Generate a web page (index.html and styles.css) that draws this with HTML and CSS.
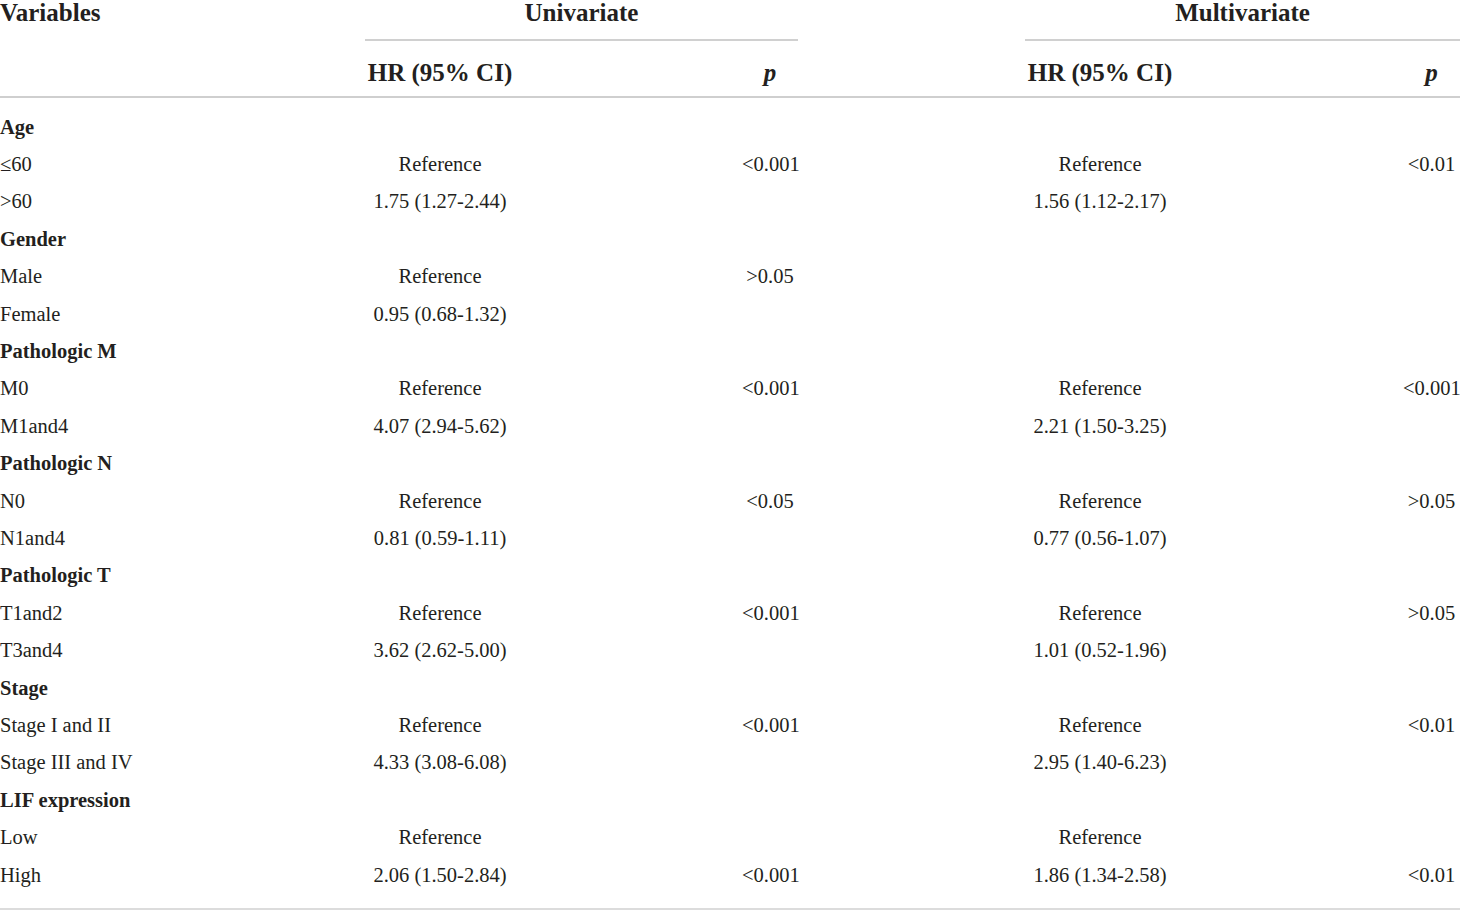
FILE: index.html
```html
<!DOCTYPE html>
<html lang="en">
<head>
<meta charset="utf-8">
<title>Cox regression</title>
<link rel="stylesheet" href="styles.css">
</head>
<body>
<table class="tbl">
  <colgroup>
    <col class="c-var"><col class="c-hr"><col class="c-gap"><col class="c-p"><col class="c-gap2"><col class="c-hr"><col class="c-gap3"><col class="c-p2">
  </colgroup>
  <thead>
    <tr class="h1">
      <th class="left">Variables</th>
      <th colspan="3" class="group">Univariate</th>
      <th></th>
      <th colspan="3" class="group">Multivariate</th>
    </tr>
    <tr class="h2">
      <th></th>
      <th>HR (95% CI)</th>
      <th></th>
      <th class="pi">p</th>
      <th></th>
      <th>HR (95% CI)</th>
      <th></th>
      <th class="pi">p</th>
    </tr>
  </thead>
  <tbody>
    <tr class="cat"><td class="left">Age</td><td></td><td></td><td></td><td></td><td></td><td></td><td></td></tr>
    <tr><td class="left">≤60</td><td>Reference</td><td></td><td>&lt;0.001</td><td></td><td>Reference</td><td></td><td>&lt;0.01</td></tr>
    <tr><td class="left">&gt;60</td><td>1.75 (1.27-2.44)</td><td></td><td></td><td></td><td>1.56 (1.12-2.17)</td><td></td><td></td></tr>
    <tr class="cat"><td class="left">Gender</td><td></td><td></td><td></td><td></td><td></td><td></td><td></td></tr>
    <tr><td class="left">Male</td><td>Reference</td><td></td><td>&gt;0.05</td><td></td><td></td><td></td><td></td></tr>
    <tr><td class="left">Female</td><td>0.95 (0.68-1.32)</td><td></td><td></td><td></td><td></td><td></td><td></td></tr>
    <tr class="cat"><td class="left">Pathologic M</td><td></td><td></td><td></td><td></td><td></td><td></td><td></td></tr>
    <tr><td class="left">M0</td><td>Reference</td><td></td><td>&lt;0.001</td><td></td><td>Reference</td><td></td><td>&lt;0.001</td></tr>
    <tr><td class="left">M1and4</td><td>4.07 (2.94-5.62)</td><td></td><td></td><td></td><td>2.21 (1.50-3.25)</td><td></td><td></td></tr>
    <tr class="cat"><td class="left">Pathologic N</td><td></td><td></td><td></td><td></td><td></td><td></td><td></td></tr>
    <tr><td class="left">N0</td><td>Reference</td><td></td><td>&lt;0.05</td><td></td><td>Reference</td><td></td><td>&gt;0.05</td></tr>
    <tr><td class="left">N1and4</td><td>0.81 (0.59-1.11)</td><td></td><td></td><td></td><td>0.77 (0.56-1.07)</td><td></td><td></td></tr>
    <tr class="cat"><td class="left">Pathologic T</td><td></td><td></td><td></td><td></td><td></td><td></td><td></td></tr>
    <tr><td class="left">T1and2</td><td>Reference</td><td></td><td>&lt;0.001</td><td></td><td>Reference</td><td></td><td>&gt;0.05</td></tr>
    <tr><td class="left">T3and4</td><td>3.62 (2.62-5.00)</td><td></td><td></td><td></td><td>1.01 (0.52-1.96)</td><td></td><td></td></tr>
    <tr class="cat"><td class="left">Stage</td><td></td><td></td><td></td><td></td><td></td><td></td><td></td></tr>
    <tr><td class="left">Stage I and II</td><td>Reference</td><td></td><td>&lt;0.001</td><td></td><td>Reference</td><td></td><td>&lt;0.01</td></tr>
    <tr><td class="left">Stage III and IV</td><td>4.33 (3.08-6.08)</td><td></td><td></td><td></td><td>2.95 (1.40-6.23)</td><td></td><td></td></tr>
    <tr class="cat"><td class="left">LIF expression</td><td></td><td></td><td></td><td></td><td></td><td></td><td></td></tr>
    <tr><td class="left">Low</td><td>Reference</td><td></td><td></td><td></td><td>Reference</td><td></td><td></td></tr>
    <tr class="last"><td class="left">High</td><td>2.06 (1.50-2.84)</td><td></td><td>&lt;0.001</td><td></td><td>1.86 (1.34-2.58)</td><td></td><td>&lt;0.01</td></tr>
  </tbody>
</table>
</body>
</html>
```
FILE: styles.css
```css
html, body {
  margin: 0;
  padding: 0;
  background: #ffffff;
}
body {
  font-family: "Liberation Serif", "Times New Roman", serif;
  color: #231f20;
}
.tbl {
  width: 1460px;
  table-layout: fixed;
  border-collapse: separate;
  border-spacing: 0;
}
.c-var { width: 365px; }
.c-hr { width: 150px; }
.c-gap { width: 227px; }
.c-p { width: 56px; }
.c-gap2 { width: 227px; }
.c-gap3 { width: 228px; }
.c-p2 { width: 57px; }
.tbl th, .tbl td {
  padding: 0;
  white-space: nowrap;
  text-align: center;
}
.tbl th {
  font-size: 25px;
  font-weight: bold;
  line-height: 25px;
}
.tbl .left {
  text-align: left;
}
.h1 th {
  height: 39px;
  vertical-align: top;
  padding-top: 0;
}
.h1 th.group {
  border-bottom: 2px solid #d0d0d0;
}
.h2 th {
  height: 48px;
  padding-top: 7px;
  vertical-align: middle;
  border-bottom: 2px solid #cfcfcf;
}
.pi {
  font-style: italic;
}
.tbl td {
  font-size: 20.5px;
  line-height: 24px;
  height: 37.4px;
  vertical-align: middle;
}
.cat td {
  font-weight: bold;
}
tbody tr:first-child td {
  padding-top: 10px;
}
tbody tr.last td {
  padding-bottom: 15px;
  border-bottom: 3px solid #dcdcdc;
}
```
